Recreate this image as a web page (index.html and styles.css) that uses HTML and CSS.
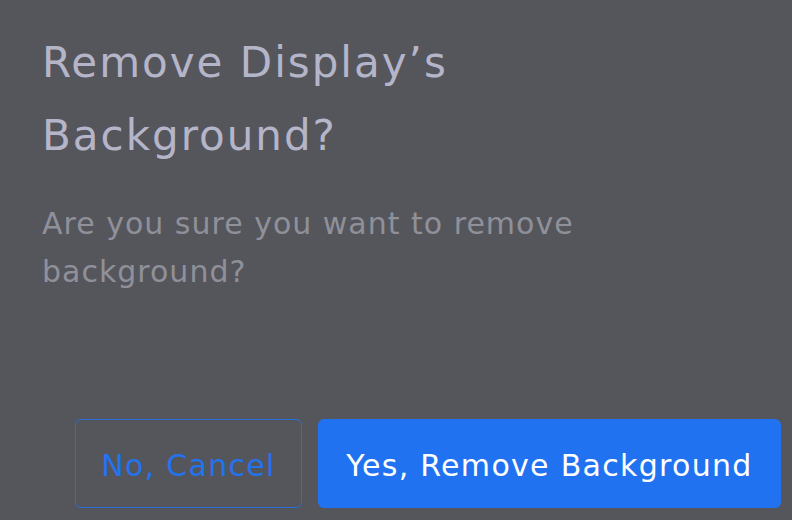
FILE: index.html
```html
<!DOCTYPE html>
<html lang="en">
<head>
    <meta charset="UTF-8">
    <title>Remove Background</title>
    <link rel="stylesheet" href="styles.css">
</head>
<body>
    <div class="dialog">
        <h1 class="dialog-title">Remove Display’s Background?</h1>
        <p class="dialog-text">Are you sure you want to remove background?</p>
        <div class="dialog-actions">
            <button class="btn btn-outline">No, Cancel</button>
            <button class="btn btn-primary">Yes, Remove Background</button>
        </div>
    </div>
</body>
</html>
```

FILE: styles.css
```css
body {
    margin: 0;
    background-color: #55565c;
    font-family: "DejaVu Sans", Arial, sans-serif;
}
.dialog {
    padding: 26px 11px 0 42px;
}
.dialog-title {
    margin: 0;
    width: 470px;
    font-size: 42px;
    font-weight: normal;
    letter-spacing: 2px;
    line-height: 73px;
    color: #b5b5c9;
}
.dialog-text {
    margin: 28px 0 0;
    width: 560px;
    font-size: 30px;
    letter-spacing: 1px;
    line-height: 48px;
    color: #8f9099;
}
.dialog-actions {
    display: flex;
    justify-content: flex-end;
    gap: 16px;
    margin-top: 123px;
}
.btn {
    height: 89px;
    padding: 4px 0 0;
    border-radius: 6px;
    font-family: "DejaVu Sans", Arial, sans-serif;
    font-size: 30px;
    letter-spacing: 1.3px;
    cursor: pointer;
}
.btn-outline {
    width: 227px;
    background-color: transparent;
    border: 1px solid #2a6ed8;
    color: #2373ee;
}
.btn-primary {
    width: 463px;
    background-color: #2072f1;
    border: none;
    color: #ffffff;
}
```
